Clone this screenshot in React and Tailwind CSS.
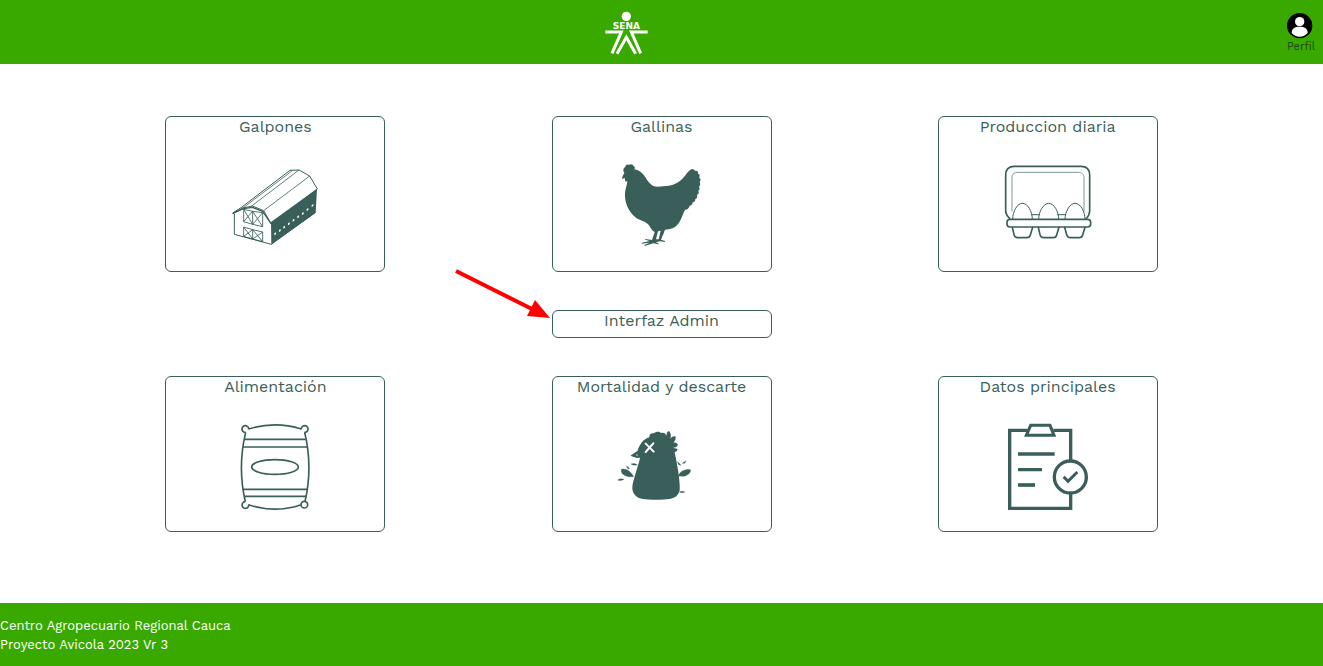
import React from 'react';

const INK = '#3a5f5a';

function Barn() {
  return (
    <svg viewBox="15 135 300 300" className="size-[100px]" fill="none" stroke={INK} strokeWidth="3" strokeLinejoin="round" aria-hidden="true">
      <path d="M153 336 L291 236 L287 308 L154 403Z" fill={INK} stroke="none" />
      <path d="M38 309 L63 293 L210 181 L237 180 L269 198 L292 237 L153 341 L131 302 L97 288 L68 294 L38 311" />
      <path d="M66 296 L217 182 M95 288 L237 180 M131 302 L269 198" strokeWidth="2.4" />
      <path d="M38 311 L70 296 L97 292 L128 304 L153 341" strokeWidth="4" />
      <path d="M43 312 L43 373 L154 403 L287 307" />
      <path d="M71 298 L98 304 L128 308 V350 L98 343 L71 335Z M98 304 V343 M71 298 L98 343 M98 304 L71 335 M98 304 L128 350 M128 308 L98 343" strokeWidth="2.6" />
      <path d="M71 351 L98 359 L128 366 V395 L98 387 L71 379Z M98 359 V387 M71 351 L98 387 M98 359 L71 379 M98 359 L128 395 M128 366 L98 387" strokeWidth="2.6" />
      <g fill="#fff" stroke="none">
        <path d="M163 370l5-3v6l-5 3zM177 360l5-3v6l-5 3zM190 350l5-3v6l-5 3zM204 340l5-3v6l-5 3zM218 329l5-3v6l-5 3zM232 319l5-3v6l-5 3zM246 309l5-3v6l-5 3zM260 297l5-3v6l-5 3zM275 285l5-3v6l-5 3z" />
      </g>
    </svg>
  );
}

function Hen() {
  return (
    <svg viewBox="6 135 300 300" className="size-[100px]" fill={INK} aria-hidden="true">
      <path d="M43 189 C38 182 40 173 46 171 C46 165 52 162 57 165 C62 161 70 164 70 168 C75 169 76 174 73 178 C91 181 101 193 109 206 C118 220 127 230 143 230 L176 227 C198 224 211 213 222 201 C230 191 237 180 246 177 C252 177 254 180 255 183 C262 181 266 186 264 191 C270 192 271 198 267 202 C272 205 273 212 269 216 C272 221 271 227 267 230 C270 235 269 240 265 242 C268 247 266 253 261 254 C263 260 261 266 256 267 C256 274 252 277 248 277 C248 283 244 288 239 287 C237 294 232 299 226 299 C221 304 221 310 217 318 C211 332 205 345 195 351 C185 357 174 358 165 359 C162 365 161 372 157 379 L153 389 L165 393 L166 396 L150 394 L137 397 L146 400 L145 403 L130 400 L104 408 L103 405 L119 398 L94 401 L96 398 L119 393 L105 389 L107 387 L126 390 L134 366 C124 361 122 352 117 346 C109 334 92 333 79 324 C59 308 47 286 45 260 C44 240 51 227 52 214 L47 215 C44 209 44 205 45 204 L36 207 L38 198Z" />
      <path d="M144 364 L138 388 L146 388 L152 362Z" fill="#fff" />
    </svg>
  );
}

function EggCarton() {
  return (
    <svg viewBox="9 0 300 300" className="size-[100px]" fill="none" stroke={INK} strokeWidth="4" strokeLinejoin="round" strokeLinecap="round" aria-hidden="true">
      <path d="M44 190 C36 184 32 176 32 166 V60 C32 43 42 34 58 34 H258 C275 34 284 43 284 60 V166 C284 176 281 184 274 190" strokeWidth="5" />
      <path d="M51 168 V68 C51 57 58 52 68 52 H249 C260 52 267 58 267 68 V168" stroke="#7d9894" strokeWidth="3" />
      <path d="M53 192 C53 169 67 145 82 145 C98 145 112 169 112 192 M131 192 C131 169 146 145 161 145 C177 145 191 169 191 192 M210 192 C210 169 225 145 240 145 C256 145 270 169 270 192" strokeWidth="3" />
      <path d="M109 179 H133 M188 179 H212" strokeWidth="3" />
      <rect x="36" y="193" width="251" height="23" rx="9" strokeWidth="5" />
      <path d="M52 217 L57 239 Q59 248 68 248 H96 Q104 248 106 240 L113 217 M130 217 L135 239 Q137 248 146 248 H175 Q183 248 185 240 L192 217 M209 217 L215 239 Q217 248 226 248 H253 Q261 248 263 240 L270 217" strokeWidth="5" />
    </svg>
  );
}

function FeedSack() {
  return (
    <svg viewBox="-15 0 300 300" className="size-[100px]" fill="none" stroke={INK} strokeWidth="5" strokeLinejoin="round" aria-hidden="true">
      <path d="M56 42 Q135 17 214 42" />
      <path d="M56 269 Q135 296 214 269" />
      <path d="M47 52 Q22 156 46 260 M224 52 Q249 156 225 260" />
      <path d="M56 43 A10 10 0 1 0 47 52 M214 43 A10 10 0 1 1 223 52 M56 268 A10 10 0 1 1 46 260" />
      <circle cx="223" cy="269" r="10" />
      <path d="M43 73H227 M39 96H231 M39 223H232 M43 244H228" />
      <ellipse cx="135" cy="156" rx="70" ry="22" />
    </svg>
  );
}

function DeadChick() {
  return (
    <svg viewBox="12 -15 300 300" className="size-[100px]" fill={INK} aria-hidden="true">
      <path d="M67 107 L89 92 C94 74 106 57 124 52 C123 43 130 38 138 40 C144 34 154 34 159 39 C166 36 172 40 176 47 C175 39 178 34 183 33 C189 39 190 48 187 56 C193 49 198 48 203 50 C204 60 199 66 193 69 C201 66 206 69 210 74 C207 81 201 83 195 83 L209 87 C208 93 204 96 200 96 C204 118 209 139 212 163 C214 181 216 197 215 211 C211 227 201 234 188 236 C163 240 125 240 101 236 C85 233 75 222 73 207 C72 193 78 178 82 163 C87 144 94 126 96 113 L86 114Z" />
      <path d="M113 71 L137 95 M136 70 L113 96" stroke="#fff" strokeWidth="6" strokeLinecap="round" />
      <circle cx="87" cy="105" r="2" fill="#fff" />
      <path d="M77 170 C63 172 50 168 43 161 C39 155 38 149 42 147 C57 145 70 156 77 170Z M211 168 C217 153 231 147 247 149 C250 157 240 166 227 169Z M69 132 Q78 128 88 134 Q78 139 69 132Z M55 137 L65 145 L60 147Z M29 180 Q38 174 48 178 Q39 184 29 180Z M208 125 L214 130 L219 136 L212 134Z M223 130 L234 122 L230 130Z M214 216 Q222 211 231 216 Q222 221 214 216Z" stroke={INK} strokeWidth="1" />
    </svg>
  );
}

function ClipboardCheck() {
  return (
    <svg viewBox="0 0 300 300" className="size-[100px]" fill="none" stroke={INK} strokeWidth="10" aria-hidden="true">
      <path d="M88 46 H35 V280 H218 V236 M218 136 V46 H166" />
      <path d="M98 31 H156 L168 61 H85Z" strokeWidth="9" />
      <path d="M60 117H170 M60 164H132" />
      <path d="M60 210H111" strokeWidth="11" />
      <circle cx="217" cy="186" r="48" />
      <path d="M197 185 L210 199 L238 171" strokeWidth="9" />
    </svg>
  );
}

function SenaLogo() {
  return (
    <svg viewBox="0 4 180 180" className="size-[60px]" role="img" aria-label="SENA">
      <circle cx="91" cy="47" r="14" fill="#fff" />
      <text x="91" y="84" textAnchor="middle" fill="#fff" fontFamily="'DejaVu Sans', sans-serif" fontWeight="700" fontSize="27">SENA</text>
      <g fill="none" stroke="#fff" strokeWidth="9">
        <path d="M28 94 H76 L48 158 M155 94 H106 L134 158 M63 159 L91 110 L119 159" />
      </g>
    </svg>
  );
}

function Card({ label, Icon }) {
  return (
    <a href="#" className="flex w-[220px] flex-col items-center rounded-md border border-[#3a5f5a] text-base leading-5 text-[#3a5f5a]">
      <span className="whitespace-nowrap">{label}</span>
      {Icon && (
        <span className="pt-[18px] pb-4">
          <Icon />
        </span>
      )}
    </a>
  );
}

export default function App() {
  return (
    <div className="flex min-h-screen flex-col bg-white font-['Work_Sans','Inter',sans-serif]">
      <header className="flex h-16 items-center bg-[#39a900]">
        <div className="flex grow justify-center">
          <a href="#">
            <SenaLogo />
          </a>
        </div>
        <div className="flex w-[72px] justify-end pr-2">
          <button type="button" className="flex flex-col items-start pt-1 text-[11px] leading-4 text-[#1c4a10]">
            <svg viewBox="0 0 78 78" className="size-[26px]" aria-hidden="true">
              <circle cx="38" cy="38" r="38" fill="#000" />
              <circle cx="38" cy="26" r="14" fill="#fff" />
              <path d="M14 60 C14 46 23 41 38 41 C53 41 62 46 62 60 C56 67 48 71 38 71 C28 71 20 67 14 60Z" fill="#fff" />
            </svg>
            <span>Perfil</span>
          </button>
        </div>
      </header>

      <main className="flex grow flex-col gap-[38px] px-[12.5%] pt-[52px] pb-16">
        <div className="flex justify-between">
          <Card label="Galpones" Icon={Barn} />
          <Card label="Gallinas" Icon={Hen} />
          <Card label="Produccion diaria" Icon={EggCarton} />
        </div>
        <div className="flex justify-center">
          <a href="#" className="relative w-[220px] rounded-md border border-[#3a5f5a] pb-1.5 text-center text-base leading-5 text-[#3a5f5a]">
            Interfaz Admin
            <svg viewBox="3 1 100 54" className="pointer-events-none absolute right-full bottom-4 h-[54px] w-[100px]" aria-hidden="true">
              <path d="M6 5 L82 43" stroke="#f00" strokeWidth="4" />
              <path d="M100 52 L85 34 L77 50Z" fill="#f00" />
            </svg>
          </a>
        </div>
        <div className="flex justify-between">
          <Card label="Alimentación" Icon={FeedSack} />
          <Card label="Mortalidad y descarte" Icon={DeadChick} />
          <Card label="Datos principales" Icon={ClipboardCheck} />
        </div>
      </main>

      <footer className="bg-[#39a900] pt-[13px] pb-3 text-[13px] leading-[19px] text-white">
        <p>Centro Agropecuario Regional Cauca</p>
        <p>Proyecto Avicola 2023 Vr 3</p>
      </footer>
    </div>
  );
}
